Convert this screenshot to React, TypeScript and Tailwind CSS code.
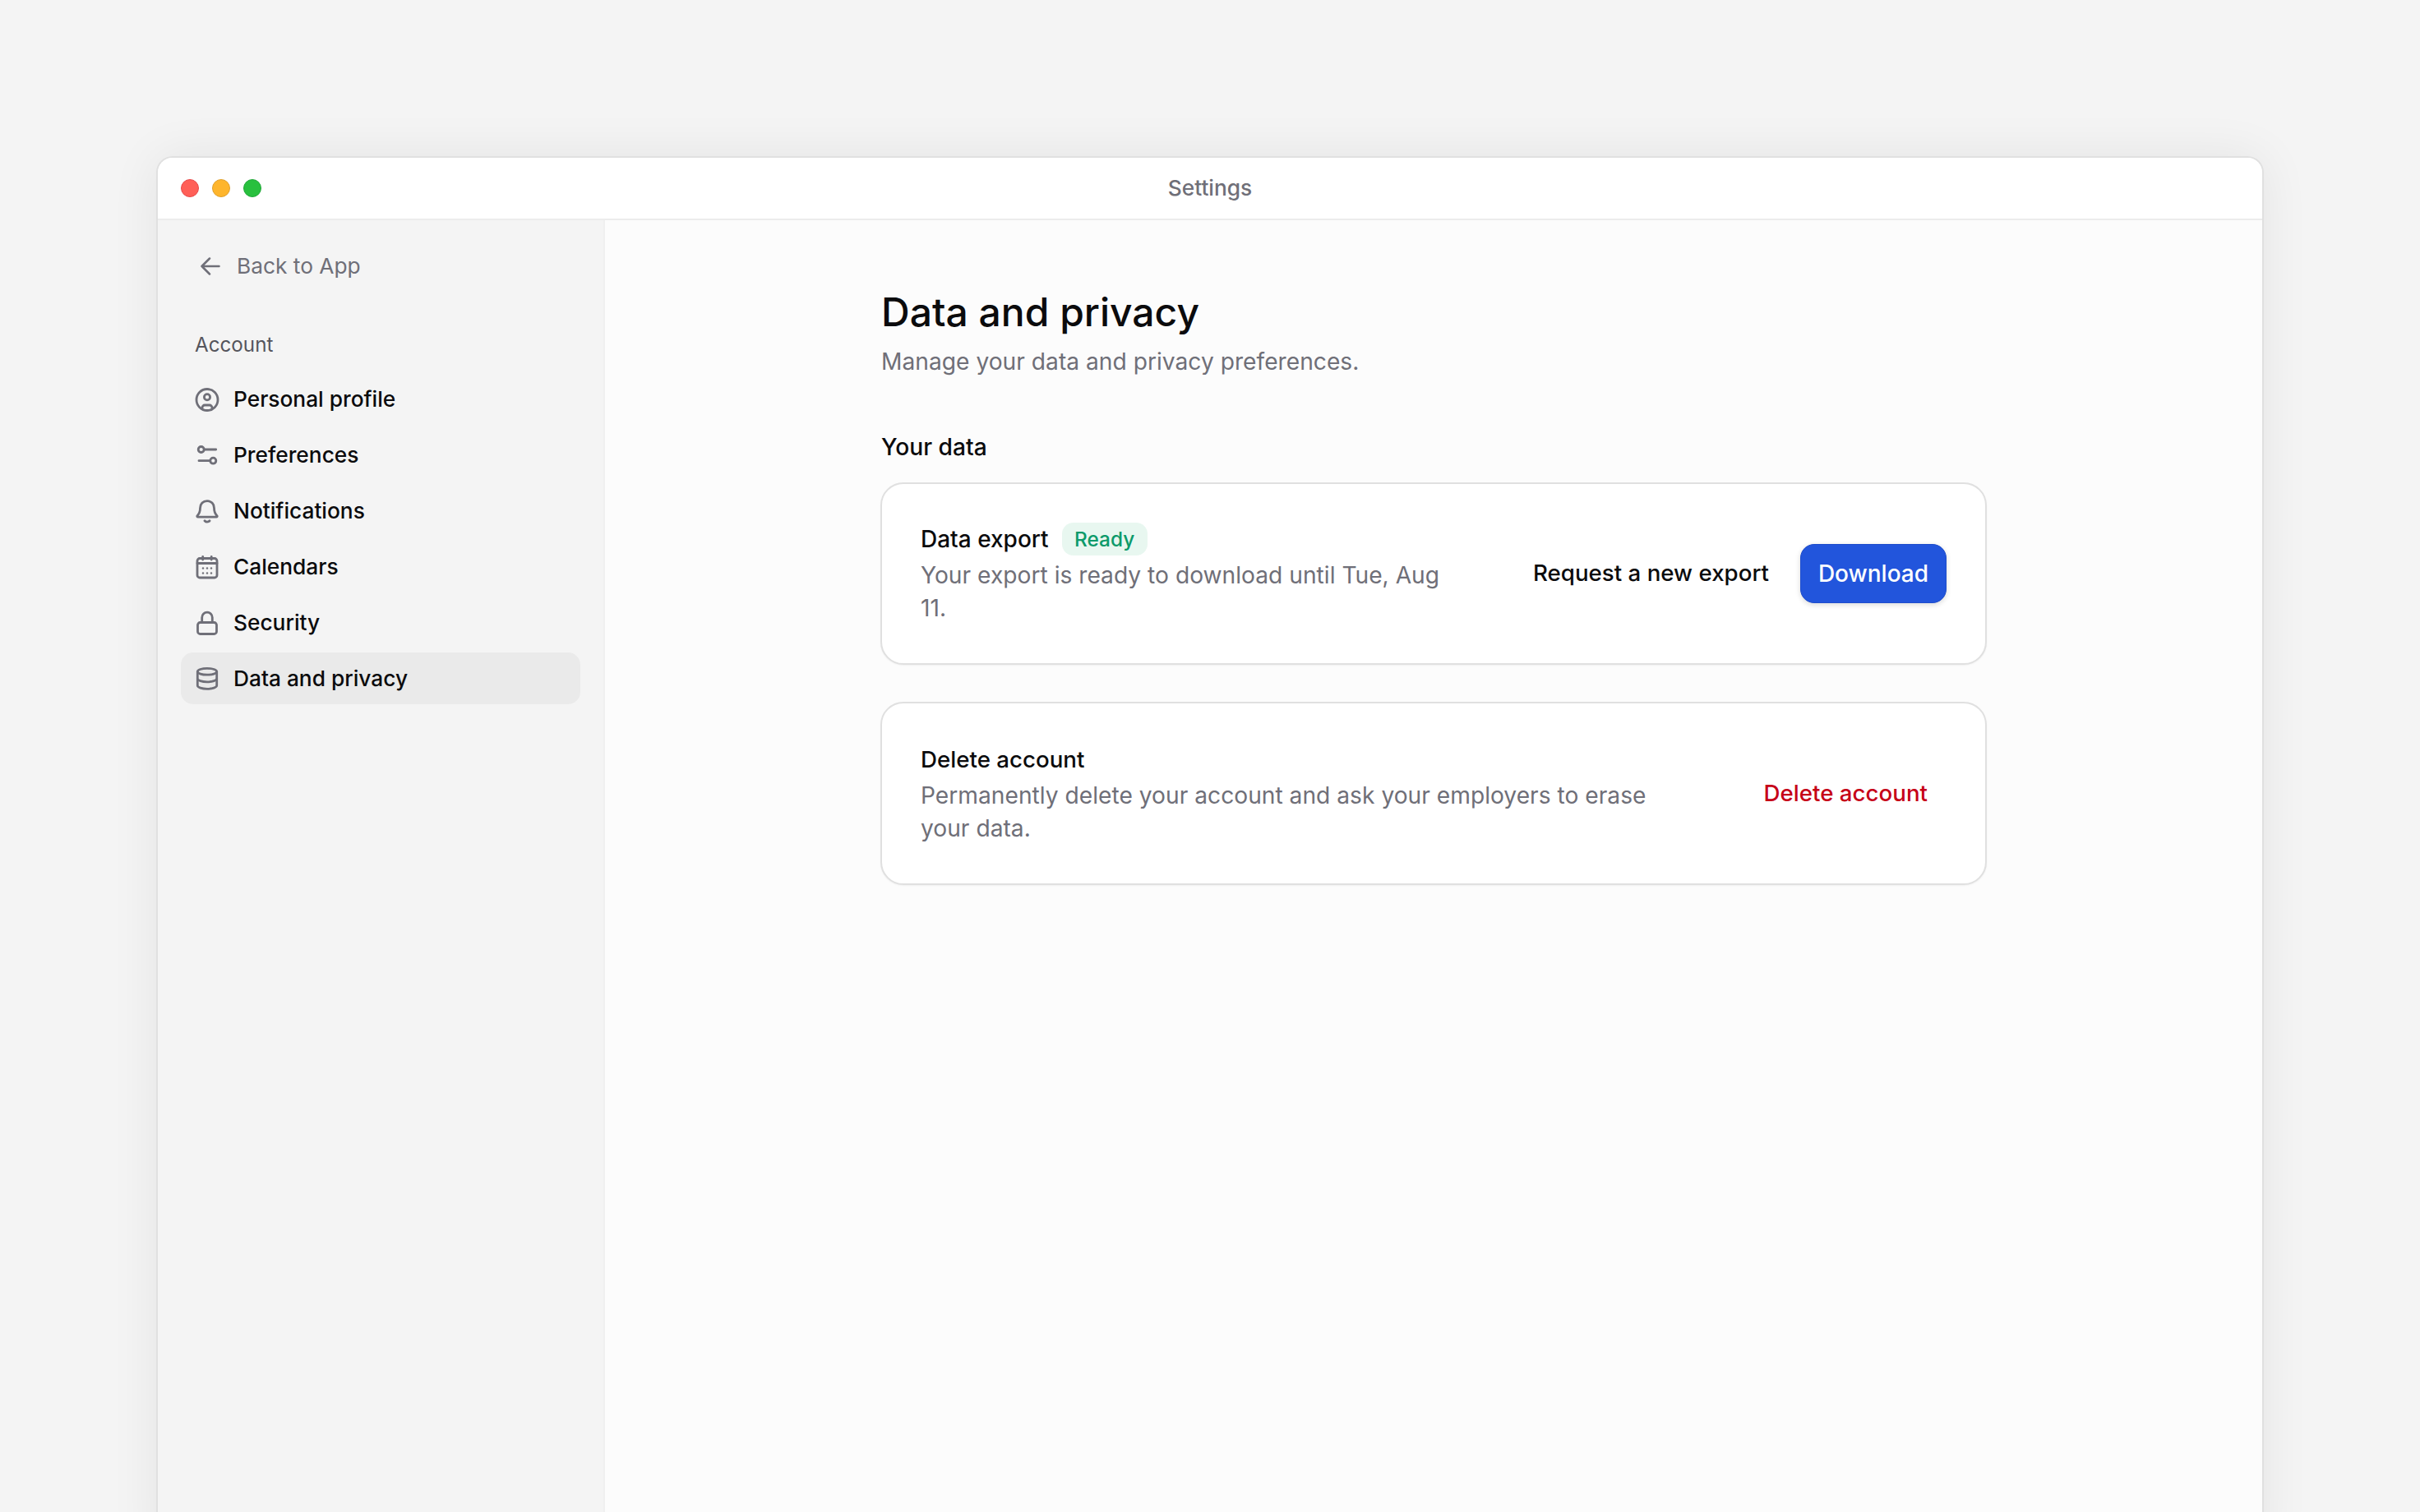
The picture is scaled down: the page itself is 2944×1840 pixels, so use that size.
import React from 'react';

const iconCls = 'w-[30px] h-[30px] shrink-0 text-[#6f6f78]';

function ProfileIcon() {
  return (
    <svg viewBox="0 0 30 30" fill="none" stroke="currentColor" strokeWidth="2.800" className={iconCls}>
      <circle cx="15" cy="15.500" r="13" />
      <circle cx="15" cy="12.300" r="3.600" />
      <path d="M9 26.500v-1.500c0-1.600 1.400-3 3-3h6c1.600 0 3 1.400 3 3v1.500" />
    </svg>
  );
}

function SlidersIcon() {
  return (
    <svg viewBox="0 0 30 30" fill="none" stroke="currentColor" strokeWidth="2.800" strokeLinecap="round" className={iconCls}>
      <circle cx="7.700" cy="8" r="3.500" />
      <path d="M11.500 8h14.200" />
      <circle cx="22.300" cy="21.700" r="3.500" />
      <path d="M5 21.700h13" />
    </svg>
  );
}

function BellIcon() {
  return (
    <svg viewBox="0 0 30 30" fill="none" stroke="currentColor" strokeWidth="2.800" strokeLinecap="round" strokeLinejoin="round" className={iconCls}>
      <path d="M15 2.700c-5 0-8.500 3.500-8.500 8.500 0 4-.5 6.300-3.300 9.200-.8.800-.3 1.800.7 1.800h22.200c1 0 1.500-1 .7-1.800-2.800-2.900-3.300-5.200-3.300-9.200 0-5-3.500-8.500-8.500-8.500z" />
      <path d="M12 26.800c.8.900 1.800 1.400 3 1.400s2.200-.5 3-1.400" />
    </svg>
  );
}

function CalendarIcon() {
  return (
    <svg viewBox="0 0 30 30" fill="none" stroke="currentColor" strokeWidth="2.800" strokeLinecap="round" className={iconCls}>
      <rect x="3" y="4.500" width="24" height="23.500" rx="3" />
      <path d="M3 10.500h24M9.700 2.500v3.500M20.200 2.500v3.500" />
      <g fill="currentColor" stroke="none">
        <circle cx="10" cy="16.500" r="1.200" />
        <circle cx="15" cy="16.500" r="1.200" />
        <circle cx="20" cy="16.500" r="1.200" />
        <circle cx="10" cy="22.500" r="1.200" />
        <circle cx="15" cy="22.500" r="1.200" />
        <circle cx="20" cy="22.500" r="1.200" />
      </g>
    </svg>
  );
}

function LockIcon() {
  return (
    <svg viewBox="0 0 30 30" fill="none" stroke="currentColor" strokeWidth="2.800" className={iconCls}>
      <rect x="3.500" y="14.500" width="23" height="14" rx="3" />
      <path d="M8.700 14.500V8.500a6.300 6.300 0 0 1 12.600 0v6" />
    </svg>
  );
}

function DatabaseIcon() {
  return (
    <svg viewBox="0 0 30 30" fill="none" stroke="currentColor" strokeWidth="2.800" className={iconCls}>
      <ellipse cx="15" cy="6.300" rx="11.700" ry="3.900" />
      <path d="M3.300 6.300v17c0 2.200 5.200 4 11.700 4s11.700-1.800 11.700-4v-17" />
      <path d="M3.300 14.800c0 2.200 5.200 4 11.700 4s11.700-1.800 11.700-4" />
    </svg>
  );
}

const navItems = [
  { label: 'Personal profile', icon: <ProfileIcon /> },
  { label: 'Preferences', icon: <SlidersIcon /> },
  { label: 'Notifications', icon: <BellIcon /> },
  { label: 'Calendars', icon: <CalendarIcon /> },
  { label: 'Security', icon: <LockIcon /> },
  { label: 'Data and privacy', icon: <DatabaseIcon />, active: true },
];

export default function App() {
  return (
    <div className="h-screen overflow-hidden bg-[#f4f4f4] px-[190px] pt-[190px] font-['Inter',sans-serif]">
      <div className="flex h-[1700px] flex-col overflow-hidden rounded-t-[20px] border-2 border-b-0 border-[#e0e0e0] bg-[#fcfcfc] shadow-[0_0_60px_rgba(0,0,0,0.07)]">
        {/* title bar */}
        <div className="relative flex h-[76px] shrink-0 items-center justify-center border-b-2 border-[#ececec] bg-white">
          <div className="absolute left-[28px] flex gap-[16px]">
            <span className="h-[22px] w-[22px] rounded-full border border-[#e8494a] bg-[#ff5f57]" />
            <span className="h-[22px] w-[22px] rounded-full border border-[#e0a02c] bg-[#feb52c]" />
            <span className="h-[22px] w-[22px] rounded-full border border-[#22a83a] bg-[#28c03e]" />
          </div>
          <span className="text-[26.3px] font-medium text-[#6f6f78]">Settings</span>
        </div>

        <div className="flex flex-1">
          {/* sidebar */}
          <div className="flex w-[544px] shrink-0 flex-col border-r-2 border-[#f0f0f0] bg-[#f4f4f4] pl-[28px] pr-[28px]">
            <div className="mt-[40px] flex h-[32px] items-center gap-[17px] pl-[21px] text-[#6f6f78]">
              <svg viewBox="0 0 30 30" fill="none" stroke="currentColor" strokeWidth="2.500" strokeLinecap="round" strokeLinejoin="round" className="h-[30px] w-[30px]">
                <path d="M25.500 15H4.500M14 5.500L4.500 15l9.500 9.500" />
              </svg>
              <span className="text-[26.3px]">Back to App</span>
            </div>
            <div className="mt-[64px] pl-[17px] text-[24.2px] leading-[32px] text-[#55555c]">Account</div>
            <div className="mt-[18px] flex flex-col gap-[5px]">
              {navItems.map((item) => (
                <div
                  key={item.label}
                  className={`flex h-[63px] items-center gap-[17px] rounded-[15px] pl-[17px] text-[26.3px] font-medium text-[#0b0b0d] ${item.active ? 'bg-[#eaeaea]' : ''}`}
                >
                  {item.icon}
                  <span>{item.label}</span>
                </div>
              ))}
            </div>
          </div>

          {/* main */}
          <div className="flex flex-1 justify-center">
            <div className="w-[1346px] pt-[80px]">
              <h1 className="pl-[1px] text-[48px] font-medium leading-[64px] text-[#0b0b0d]">Data and privacy</h1>
              <p className="mt-[8px] pl-[1px] text-[28.2px] leading-[40px] text-[#6f6f78]">Manage your data and privacy preferences.</p>
              <h2 className="mt-[64px] pl-[1px] text-[28.2px] font-medium leading-[40px] text-[#0b0b0d]">Your data</h2>

              <div className="mt-[23px] flex h-[222px] items-center gap-[40px] rounded-[28px] border-2 border-[#e0e0e0] bg-white pl-[47px] pr-[47px] shadow-[0_1px_2px_rgba(0,0,0,0.05)]">
                <div className="w-[650px]">
                  <div className="flex items-center gap-[16px]">
                    <span className="text-[28px] font-medium leading-[40px] text-[#0b0b0d]">Data export</span>
                    <span className="flex h-[40px] w-[104px] items-center justify-center rounded-[14px] bg-[#e8f7f0] text-[24.4px] font-medium text-[#0c9a6a]">Ready</span>
                  </div>
                  <p className="mt-[4px] text-[28.2px] leading-[40px] text-[#6f6f78]">Your export is ready to download until Tue, Aug 11.</p>
                </div>
                <div className="ml-auto flex items-center gap-[38px]">
                  <span className="text-[27.7px] font-medium text-[#0b0b0d]">Request a new export</span>
                  <span className="flex h-[72px] w-[178px] items-center justify-center rounded-[17px] border border-[#1f4dcb] bg-[#2255dc] text-[28px] font-medium text-white shadow-[0_2px_6px_rgba(0,0,0,0.15)]">Download</span>
                </div>
              </div>

              <div className="mt-[45px] flex h-[223px] items-center gap-[40px] rounded-[28px] border-2 border-[#e0e0e0] bg-white pl-[47px] pr-[70px] shadow-[0_1px_2px_rgba(0,0,0,0.05)]">
                <div className="w-[920px]">
                  <div className="text-[27.7px] font-medium leading-[40px] text-[#0b0b0d]">Delete account</div>
                  <p className="mt-[4px] text-[28.2px] leading-[40px] text-[#6f6f78]">Permanently delete your account and ask your employers to erase your data.</p>
                </div>
                <span className="ml-auto text-[27.7px] font-medium text-[#c60017]">Delete account</span>
              </div>
            </div>
          </div>
        </div>
      </div>
    </div>
  );
}
